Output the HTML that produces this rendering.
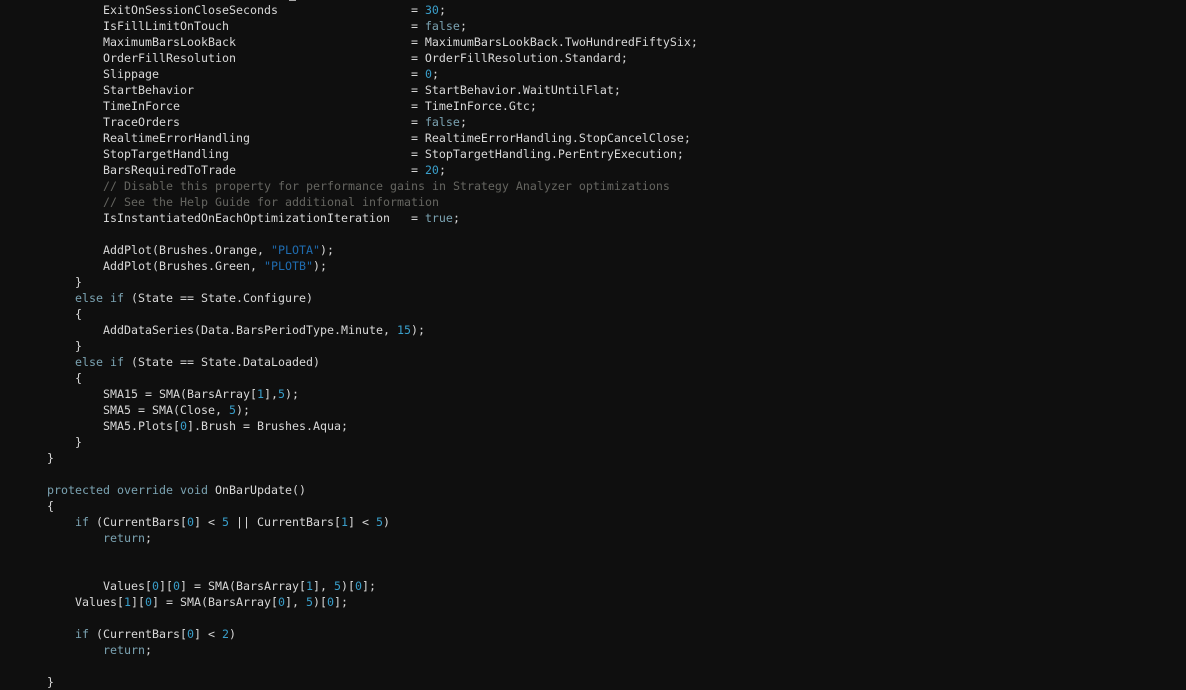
<!DOCTYPE html>
<html><head><meta charset="utf-8"><style>
html,body{margin:0;padding:0;background:#0f0f0f;width:1186px;height:690px;overflow:hidden}
pre{position:absolute;left:47px;top:2px;margin:0;font:11.63px/16px "DejaVu Sans Mono","Liberation Mono",monospace;color:#d8d8d8}
.k{color:#7ba3b2}.n{color:#3a9fcb}.s{color:#1f6cb0}.c{color:#656560}
#b{position:absolute;left:289px;top:0;width:7px;height:1px;background:#aaa}
</style></head><body><div id="b"></div><pre>        ExitOnSessionCloseSeconds                   = <span class="n">30</span>;
        IsFillLimitOnTouch                          = <span class="k">false</span>;
        MaximumBarsLookBack                         = MaximumBarsLookBack.TwoHundredFiftySix;
        OrderFillResolution                         = OrderFillResolution.Standard;
        Slippage                                    = <span class="n">0</span>;
        StartBehavior                               = StartBehavior.WaitUntilFlat;
        TimeInForce                                 = TimeInForce.Gtc;
        TraceOrders                                 = <span class="k">false</span>;
        RealtimeErrorHandling                       = RealtimeErrorHandling.StopCancelClose;
        StopTargetHandling                          = StopTargetHandling.PerEntryExecution;
        BarsRequiredToTrade                         = <span class="n">20</span>;
        <span class="c">// Disable this property for performance gains in Strategy Analyzer optimizations</span>
        <span class="c">// See the Help Guide for additional information</span>
        IsInstantiatedOnEachOptimizationIteration   = <span class="k">true</span>;

        AddPlot(Brushes.Orange, <span class="s">"PLOTA"</span>);
        AddPlot(Brushes.Green, <span class="s">"PLOTB"</span>);
    }
    <span class="k">else if</span> (State == State.Configure)
    {
        AddDataSeries(Data.BarsPeriodType.Minute, <span class="n">15</span>);
    }
    <span class="k">else if</span> (State == State.DataLoaded)
    {
        SMA15 = SMA(BarsArray[<span class="n">1</span>],<span class="n">5</span>);
        SMA5 = SMA(Close, <span class="n">5</span>);
        SMA5.Plots[<span class="n">0</span>].Brush = Brushes.Aqua;
    }
}

<span class="k">protected override void</span> OnBarUpdate()
{
    <span class="k">if</span> (CurrentBars[<span class="n">0</span>] &lt; <span class="n">5</span> || CurrentBars[<span class="n">1</span>] &lt; <span class="n">5</span>)
        <span class="k">return</span>;


        Values[<span class="n">0</span>][<span class="n">0</span>] = SMA(BarsArray[<span class="n">1</span>], <span class="n">5</span>)[<span class="n">0</span>];
    Values[<span class="n">1</span>][<span class="n">0</span>] = SMA(BarsArray[<span class="n">0</span>], <span class="n">5</span>)[<span class="n">0</span>];

    <span class="k">if</span> (CurrentBars[<span class="n">0</span>] &lt; <span class="n">2</span>)
        <span class="k">return</span>;

}</pre></body></html>
